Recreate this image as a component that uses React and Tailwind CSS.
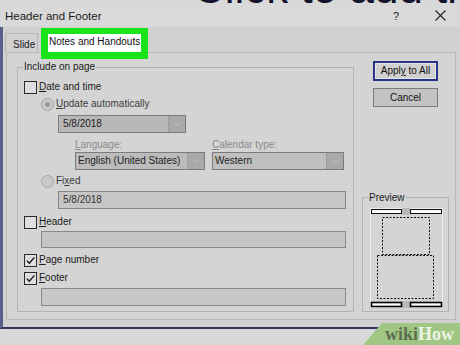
import React from "react";

function Mn({ children }) {
  return <span className="underline underline-offset-[1px]">{children}</span>;
}

function Checkbox({ checked }) {
  return (
    <span className="flex h-[13px] w-[13px] shrink-0 items-center justify-center border border-[#2a2a2a] bg-[#dedede]">
      {checked && (
        <svg width="11" height="11" viewBox="0 0 11 11">
          <polyline points="1.8,5.6 4.3,8.3 9.4,2.4" fill="none" stroke="#111" strokeWidth="1.3" />
        </svg>
      )}
    </span>
  );
}

function Radio({ selected }) {
  return (
    <span className="flex h-[13px] w-[13px] shrink-0 items-center justify-center rounded-full border border-[#a3a3a3] bg-[#c9c9c9]">
      {selected && <span className="h-[5px] w-[5px] rounded-full bg-[#9a9a9a]" />}
    </span>
  );
}

function Arrow() {
  return (
    <span className="flex w-[17px] items-center justify-center border-l border-[#9c9c9c] bg-[#a9a9a9]">
      <svg width="7" height="5" viewBox="0 0 7 5">
        <polyline points="0.5,0.8 3.5,3.8 6.5,0.8" fill="none" stroke="#c4c4c4" strokeWidth="1" />
      </svg>
    </span>
  );
}

function PagePreview() {
  return (
    <svg width="73" height="100" viewBox="0 0 73 100">
      <rect x="0.5" y="0.5" width="72" height="99" fill="none" stroke="#ececec" />
      <rect x="32" y="0" width="8" height="7" fill="#b9b9b9" />
      <rect x="1.5" y="1.5" width="30" height="4" fill="#fafafa" stroke="#111" />
      <rect x="40.5" y="1.5" width="31" height="4" fill="#fafafa" stroke="#111" />
      <rect x="12.5" y="9.5" width="47" height="37" fill="none" stroke="#111" strokeDasharray="2 1.5" />
      <rect x="7.5" y="47.5" width="56" height="43" fill="none" stroke="#111" strokeDasharray="2 1.5" />
      <rect x="32" y="93" width="8" height="7" fill="#b9b9b9" />
      <rect x="1.5" y="94.5" width="30" height="4" fill="#fafafa" stroke="#000" strokeWidth="1.6" />
      <rect x="40.5" y="94.5" width="31" height="4" fill="#fafafa" stroke="#000" strokeWidth="1.6" />
    </svg>
  );
}

export default function App() {
  return (
    <div className="relative h-[345px] w-[460px] overflow-hidden bg-[#d8d8d8] font-['Liberation_Sans',Arial,sans-serif] text-[10px] leading-[12px] text-[#1b1b1b]">
      {/* bottom edge of the slide title behind the dialog */}
      <div className="relative h-[4px] overflow-hidden">
        <div className="absolute left-[193px] top-[-34px] whitespace-nowrap text-[44px] leading-[44px] text-[#12122a]">
          Click to add title
        </div>
      </div>

      <div className="flex h-[23px] items-center bg-[#d9d9d9] pl-[5px] pr-[14px]">
        <div className="flex-1 text-[11.5px] text-[#1a1a1a]">Header and Footer</div>
        <div className="text-[11px] text-[#222]">?</div>
        <div className="ml-[36px]">
          <svg width="11" height="11" viewBox="0 0 11 11">
            <line x1="0.5" y1="0.5" x2="10.5" y2="10.5" stroke="#222" strokeWidth="1.1" />
            <line x1="10.5" y1="0.5" x2="0.5" y2="10.5" stroke="#222" strokeWidth="1.1" />
          </svg>
        </div>
      </div>

      <div className="border-b-2 border-l-[3px] border-b-[#2f3560] border-l-[#56608a] bg-[#d1d1d1] pb-[7px]">
        <div className="flex h-[25px] items-end gap-[3px] pl-[2px]">
          <div className="h-[19px] w-[33px] border border-b-0 border-[#b5b5b5] pl-[7px] pt-[5px] text-[#222]">
            Slide
          </div>
          <div className="relative z-10 -mb-[7px] h-[31px] w-[107px] whitespace-nowrap border-[7px] border-t-[6px] border-[#19e419] bg-white pl-[1px] pt-[2px] text-[#111]">
            Notes and Handouts
          </div>
        </div>

        <div className="ml-[3px] mr-[4px] flex gap-[8px] border border-[#b9b9b9] bg-[#d4d4d4] pb-[7px] pl-[10px] pr-[5px] pt-[14px]">
          <div className="flex w-[337px] flex-col border border-[#b3b3b3] pb-[5px]">
            <div className="-mt-[7px] ml-[5px] w-fit bg-[#d4d4d4] px-[1px]">Include on page</div>
            <div className="ml-[6px] mt-[7px] flex h-[14px] items-center gap-[2px]">
              <Checkbox />
              <span><Mn>D</Mn>ate and time</span>
            </div>
            <div className="ml-[23px] mt-[3px] flex h-[14px] items-center gap-[2px] text-[#3c3c3c]">
              <Radio selected />
              <span><Mn>U</Mn>pdate automatically</span>
            </div>
            <div className="ml-[40px] mt-[4px] flex h-[18px] w-[128px] border border-[#7b7b7b] bg-[#b7b7b7]">
              <span className="flex flex-1 items-center pl-[4px] text-[#222]">5/8/2018</span>
              <Arrow />
            </div>
            <div className="ml-[57px] mt-[6px] flex gap-[7px]">
              <div className="w-[130px]">
                <div className="h-[12px] text-[#8a8a8a]"><Mn>L</Mn>anguage:</div>
                <div className="mt-[1px] flex h-[18px] border border-[#7b7b7b] bg-[#bcbcbc]">
                  <span className="flex flex-1 items-center pl-[2px] text-[#222]">English (United States)</span>
                  <Arrow />
                </div>
              </div>
              <div className="w-[132px]">
                <div className="h-[12px] text-[#8a8a8a]"><Mn>C</Mn>alendar type:</div>
                <div className="mt-[1px] flex h-[18px] border border-[#7b7b7b] bg-[#bfbfbf]">
                  <span className="flex flex-1 items-center pl-[2px] text-[#222]">Western</span>
                  <Arrow />
                </div>
              </div>
            </div>
            <div className="ml-[23px] mt-[4px] flex h-[14px] items-center gap-[2px] text-[#3c3c3c]">
              <Radio />
              <span>Fi<Mn>x</Mn>ed</span>
            </div>
            <div className="ml-[40px] mt-[3px] flex h-[18px] w-[288px] items-center border border-[#858585] bg-[#c6c6c6] pl-[4px] text-[#333]">
              5/8/2018
            </div>
            <div className="ml-[6px] mt-[6px] flex h-[14px] items-center gap-[2px]">
              <Checkbox />
              <span><Mn>H</Mn>eader</span>
            </div>
            <div className="ml-[23px] mt-[2px] h-[17px] w-[305px] border border-[#8a8a8a] bg-[#c5c5c5]" />
            <div className="ml-[6px] mt-[5px] flex h-[14px] items-center gap-[2px]">
              <Checkbox checked />
              <span><Mn>P</Mn>age number</span>
            </div>
            <div className="ml-[6px] mt-[4px] flex h-[14px] items-center gap-[2px]">
              <Checkbox checked />
              <span><Mn>F</Mn>ooter</span>
            </div>
            <div className="ml-[23px] mt-[3px] h-[18px] w-[305px] border border-[#8a8a8a] bg-[#c8c8c8]" />
          </div>

          <div className="-mt-[6px] flex w-[87px] flex-col items-center">
            <div className="flex h-[20px] w-[65px] items-center justify-center border-2 border-[#27348b] bg-[#d0d0d0] text-[#111] shadow-[inset_0_0_0_1px_#e6e6e6]">
              Appl<Mn>y</Mn>&nbsp;to All
            </div>
            <div className="mt-[7px] flex h-[19px] w-[65px] items-center justify-center border border-[#7a7a7a] bg-[#c3c3c3] text-[#111]">
              Cancel
            </div>
            <div className="mt-auto flex w-[87px] flex-col border border-[#b3b3b3] pb-[3px] pl-[7px]">
              <div className="-mt-[6px] ml-[-2px] w-fit bg-[#d4d4d4] px-[1px]">Preview</div>
              <div className="mt-[4px] flex">
                <PagePreview />
              </div>
            </div>
          </div>
        </div>
      </div>

      <div className="absolute bottom-0 right-0 z-20 h-[22px] w-[97px] bg-[#9fc682] pl-[22px] pt-[2px] font-['Liberation_Serif',serif] text-[18px] font-bold leading-[18px] [clip-path:polygon(19px_0,100%_0,100%_100%,0_100%)]">
        <span className="text-[#5c6e4e]">wiki</span>
        <span className="text-[#eef4e8]">How</span>
      </div>
    </div>
  );
}
